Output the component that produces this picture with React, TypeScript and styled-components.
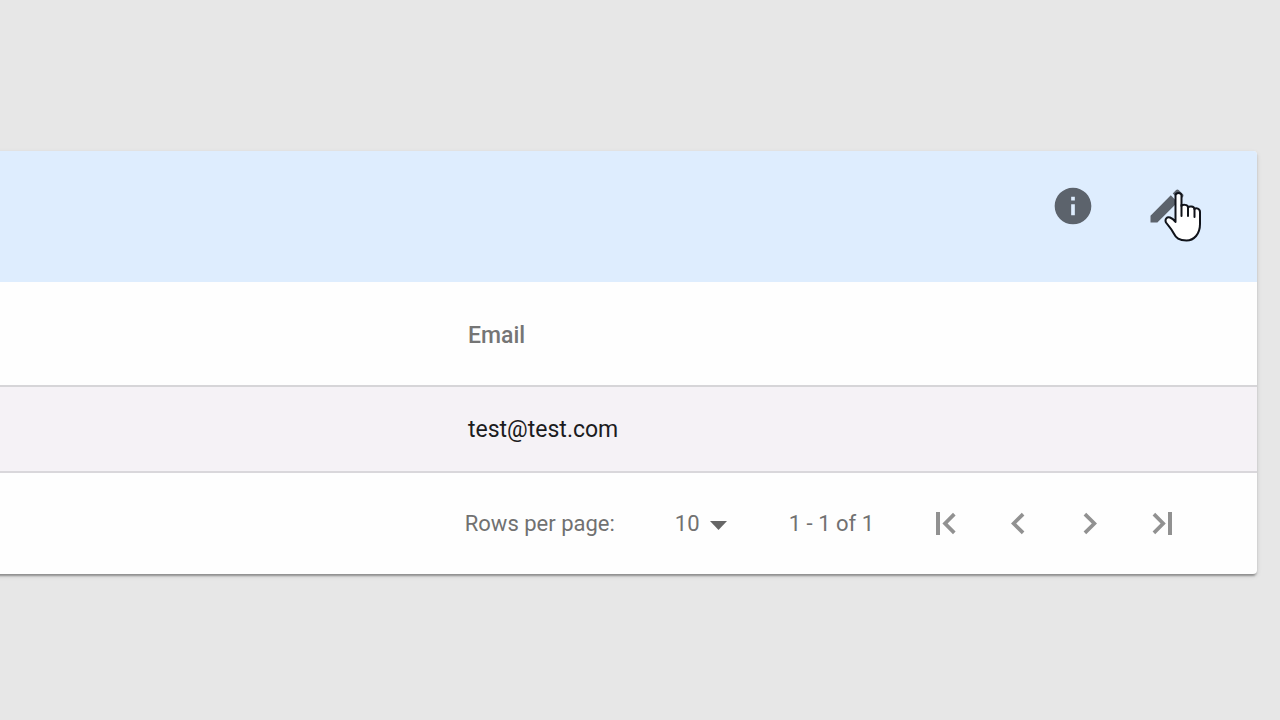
import React from "react";
import styled, { createGlobalStyle } from "styled-components";

const GlobalStyle = createGlobalStyle`
  *, *::before, *::after { box-sizing: border-box; }
  body {
    margin: 0;
    background: #e7e7e7;
    font-family: Roboto, "Liberation Sans", sans-serif;
    color: #1c1c1e;
  }
`;

const Page = styled.main`
  padding: 151px 23px 40px 0;
  overflow: hidden;
`;

const Card = styled.section`
  margin-left: -8px;
  background: #fefefe;
  border-radius: 4px;
  box-shadow: 0 4px 2px -2px rgba(0, 0, 0, 0.2), 0 2px 2px rgba(0, 0, 0, 0.14),
    0 2px 5px rgba(0, 0, 0, 0.12);
`;

const SelectionBar = styled.header`
  display: flex;
  justify-content: flex-end;
  gap: 6px;
  padding: 11px 46px 32px;
  background: #deedfe;
  border-top-right-radius: 4px;
`;

const ActionButton = styled.button`
  position: relative;
  display: flex;
  padding: 22px;
  border: 0;
  border-radius: 50%;
  background: transparent;
  color: #5c636c;
  cursor: pointer;
`;

const Pointer = styled.svg`
  position: absolute;
  left: 41px;
  top: 29px;
  pointer-events: none;
`;

const Table = styled.table`
  width: 100%;
  border-collapse: collapse;
  table-layout: fixed;
  text-align: left;
`;

const LeadColumn = styled.col`
  width: 476px;
`;

const HeadCell = styled.th`
  height: 104px;
  padding: 4px 0 0;
  border-bottom: 2px solid #d6d5d8;
  font-size: 23px;
  font-weight: 500;
  color: #757575;
`;

const Cell = styled.td`
  height: 86px;
  padding: 0;
  border-bottom: 2px solid #d9d7db;
  background: #f5f2f6;
  font-size: 23px;
`;

const Pagination = styled.footer`
  display: flex;
  align-items: center;
  justify-content: flex-end;
  padding: 15px 59px 14px 16px;
  font-size: 22px;
  line-height: 28px;
  color: #717171;
`;

const SelectWrap = styled.span`
  position: relative;
  display: flex;
  margin: 0 60px;
`;

const Select = styled.select`
  width: 54px;
  padding: 0;
  border: 0;
  background: transparent;
  appearance: none;
  font: inherit;
  color: inherit;
`;

const Caret = styled.svg`
  position: absolute;
  right: 2px;
  top: 11px;
  pointer-events: none;
`;

const PageButtons = styled.nav`
  display: flex;
  margin-left: 36px;
`;

const PageButton = styled.button`
  display: flex;
  align-items: center;
  justify-content: center;
  width: 72px;
  height: 72px;
  padding: 0;
  border: 0;
  background: transparent;
  color: #919191;
`;

const pageIcons = [
  { label: "First page", d: "M12 11h4v23h-4zM31.6 14.4L29 11.8 18.4 22.5 29 33.2l2.6-2.6-8-8.1z" },
  { label: "Previous page", d: "M28.4 14.4L25.8 11.8 15 22.5l10.8 10.7 2.6-2.6-8.2-8.1z" },
  { label: "Next page", d: "M15.6 14.4l2.6-2.6L29 22.5 18.2 33.2l-2.6-2.6 8.2-8.1z" },
  { label: "Last page", d: "M28 11h4v23h-4zM12.6 14.4l2.6-2.6 10.6 10.7-10.6 10.7-2.6-2.6 8-8.1z" },
];

export default function App() {
  return (
    <>
      <GlobalStyle />
      <Page>
        <Card>
          <SelectionBar>
            <ActionButton type="button" aria-label="Details">
              <svg width="44" height="44" viewBox="0 0 24 24" fill="currentColor">
                <path d="M12 2C6.48 2 2 6.48 2 12s4.48 10 10 10 10-4.48 10-10S17.52 2 12 2zm1 15h-2v-6h2v6zm0-8h-2V7h2v2z" />
              </svg>
            </ActionButton>
            <ActionButton type="button" aria-label="Edit">
              <svg width="44" height="44" viewBox="0 0 24 24" fill="currentColor">
                <path d="M3 17.25V21h3.75L17.81 9.94l-3.75-3.75L3 17.25zM20.71 7.04c.39-.39.39-1.02 0-1.41l-2.34-2.34c-.39-.39-1.02-.39-1.41 0l-1.83 1.83 3.75 3.75 1.83-1.83z" />
              </svg>
              <Pointer width="38" height="52" viewBox="0 0 38 52" aria-hidden="true">
                <path
                  d="M11.5 28V4.5C11.5 1 17.5 1 17.5 4.5V15C18 13.5 24 13 24 16.5C25 15 30 15 30.5 18C32 16.5 36 17.5 36 21V33C36 43 30 49.5 22.5 49.5C15 49.5 12 47 9.5 42C7 37 4 34.5 2 31.5C0.5 28 3 25.5 6 26.5C8.5 27.5 10 29 11.5 31Z"
                  fill="#fff"
                  stroke="#10131a"
                  strokeWidth="2"
                  strokeLinejoin="round"
                />
                <path d="M17.5 14V25M24 16V25M30.5 18V26" stroke="#10131a" strokeWidth="2" strokeLinecap="round" />
              </Pointer>
            </ActionButton>
          </SelectionBar>
          <Table>
            <colgroup>
              <LeadColumn />
              <col />
            </colgroup>
            <thead>
              <tr>
                <HeadCell />
                <HeadCell scope="col">Email</HeadCell>
              </tr>
            </thead>
            <tbody>
              <tr>
                <Cell />
                <Cell>test@test.com</Cell>
              </tr>
            </tbody>
          </Table>
          <Pagination>
            <label htmlFor="rows">Rows per page:</label>
            <SelectWrap>
              <Select id="rows" defaultValue="10">
                <option>10</option>
                <option>20</option>
                <option>30</option>
              </Select>
              <Caret width="17" height="9" viewBox="0 0 17 9" aria-hidden="true">
                <path d="M0 0h17L8.5 9z" fill="#666" />
              </Caret>
            </SelectWrap>
            <span>1 - 1 of 1</span>
            <PageButtons aria-label="Pagination">
              {pageIcons.map((icon) => (
                <PageButton key={icon.label} type="button" aria-label={icon.label}>
                  <svg width="44" height="44" viewBox="0 1 44 44" fill="currentColor">
                    <path d={icon.d} />
                  </svg>
                </PageButton>
              ))}
            </PageButtons>
          </Pagination>
        </Card>
      </Page>
    </>
  );
}
